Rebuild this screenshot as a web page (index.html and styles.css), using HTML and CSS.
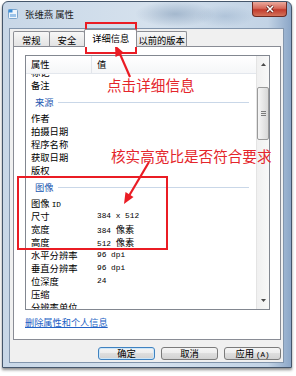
FILE: index.html
```html
<!DOCTYPE html>
<html lang="zh-CN">
<head>
    <meta charset="UTF-8">
    <meta name="viewport" content="width=device-width, initial-scale=1.0">
    <title>张维燕 属性</title>
    <link rel="stylesheet" href="styles.css">
</head>
<body>
    <div class="window">
        <div class="titlebar">
            <svg class="app-icon" width="10" height="10" viewBox="0 0 10 10">
                <rect x="0.5" y="0.5" width="9" height="9" rx="1" fill="#eef5fc" stroke="#7ea6cc"/>
                <rect x="0.5" y="0.5" width="4" height="3" fill="#3d8fd8"/>
                <rect x="2" y="5" width="6" height="3" fill="#9cc4ea"/>
            </svg>
            <span class="title">张维燕 属性</span>
            <div class="close-btn">
                <svg width="10" height="8" viewBox="0 0 10 8">
                    <path d="M2 1 L8 7 M8 1 L2 7" stroke="#5a1d16" stroke-width="3"/>
                    <path d="M2 1 L8 7 M8 1 L2 7" stroke="#fff" stroke-width="1.6"/>
                </svg>
            </div>
        </div>

        <div class="client">
            <div class="tabs">
                <div class="tab">常规</div>
                <div class="tab">安全</div>
                <div class="tab tab-active">详细信息</div>
                <div class="tab tab-last">以前的版本</div>
            </div>

            <div class="panel">
                <div class="listview">
                    <div class="list-main">
                        <div class="list-header">
                            <div class="col-name">属性</div>
                            <div class="col-val">值</div>
                        </div>
                        <div class="list-body">
                            <div class="list-rows">
                                <div class="row"><span class="name">标记</span><span class="val"></span></div>
                                <div class="row"><span class="name">备注</span><span class="val"></span></div>
                                <div class="group">来源</div>
                                <div class="row"><span class="name">作者</span><span class="val"></span></div>
                                <div class="row"><span class="name">拍摄日期</span><span class="val"></span></div>
                                <div class="row"><span class="name">程序名称</span><span class="val"></span></div>
                                <div class="row"><span class="name">获取日期</span><span class="val"></span></div>
                                <div class="row"><span class="name">版权</span><span class="val"></span></div>
                                <div class="group">图像</div>
                                <div class="row"><span class="name">图像 <span class="mono">ID</span></span><span class="val"></span></div>
                                <div class="row"><span class="name">尺寸</span><span class="val">384 x 512</span></div>
                                <div class="row"><span class="name">宽度</span><span class="val">384 <span class="unit">像素</span></span></div>
                                <div class="row"><span class="name">高度</span><span class="val">512 <span class="unit">像素</span></span></div>
                                <div class="row"><span class="name">水平分辨率</span><span class="val">96 dpi</span></div>
                                <div class="row"><span class="name">垂直分辨率</span><span class="val">96 dpi</span></div>
                                <div class="row"><span class="name">位深度</span><span class="val">24</span></div>
                                <div class="row"><span class="name">压缩</span><span class="val"></span></div>
                                <div class="row"><span class="name">分辨率单位</span><span class="val"></span></div>
                            </div>
                        </div>
                    </div>
                    <div class="scrollbar">
                        <div class="sb-btn">
                            <svg width="5" height="3" viewBox="0 0 5 3"><path d="M0 3 L2.5 0 L5 3 Z" fill="#4a4a4a"/></svg>
                        </div>
                        <div class="sb-track">
                            <div class="sb-thumb">
                                <span class="grip"></span>
                                <span class="grip"></span>
                                <span class="grip"></span>
                            </div>
                        </div>
                        <div class="sb-btn">
                            <svg width="5" height="3" viewBox="0 0 5 3"><path d="M0 0 L2.5 3 L5 0 Z" fill="#4a4a4a"/></svg>
                        </div>
                    </div>
                </div>
                <div class="panel-footer">
                    <a class="remove-link" href="#">删除属性和个人信息</a>
                </div>
            </div>

            <div class="buttons">
                <button class="btn btn-default">确定</button>
                <button class="btn">取消</button>
                <button class="btn">应用<span class="accel">(A)</span></button>
            </div>
        </div>
    </div>

    <!-- red annotations drawn over the screenshot -->
    <svg class="marks" width="296" height="376" viewBox="0 0 296 376">
        <rect x="86" y="23" width="50" height="30" fill="none" stroke="#ea1c24" stroke-width="2"/>
        <line x1="130" y1="77" x2="120" y2="54" stroke="#ea1c24" stroke-width="2.2"/>
        <polygon points="115,45 124,53 115.5,57" fill="#ea1c24"/>

        <rect x="18" y="177" width="149" height="72" fill="none" stroke="#ea1c24" stroke-width="2"/>
        <line x1="149" y1="162" x2="129.5" y2="195" stroke="#ea1c24" stroke-width="2.2"/>
        <polygon points="124,204 133.5,197 125.5,192" fill="#ea1c24"/>
    </svg>
    <div class="note note-tab">点击详细信息</div>
    <div class="note note-ratio">核实高宽比是否符合要求</div>
</body>
</html>
```

FILE: styles.css
```css
* {
    box-sizing: border-box;
}

body {
    margin: 0;
    position: relative;
    width: 296px;
    height: 376px;
    overflow: hidden;
    background: #fff;
    font-family: "Noto Sans CJK SC", sans-serif;
    font-size: 9.3px;
    color: #000;
}

.window {
    margin: 1px 0 0 2px;
    width: 290px;
    height: 367px;
    border: 1px solid #45566b;
    border-radius: 6px 6px 0 0;
    display: flex;
    flex-direction: column;
    background:
        radial-gradient(ellipse 40px 13px at 172px 12px, rgba(110, 138, 170, 0.45), transparent),
        radial-gradient(ellipse 30px 11px at 222px 14px, rgba(130, 158, 190, 0.35), transparent),
        linear-gradient(90deg, #c8d7e7 0%, #d5e1ed 50%, #c2d3e5 92%, #8ca7c8 100%);
    box-shadow: 0 2px 3px rgba(0, 0, 0, 0.45);
}

/* title bar */
.titlebar {
    height: 26px;
    display: flex;
    align-items: center;
    padding: 0 4px 2px 5px;
}

.app-icon {
    margin-right: 7px;
}

.title {
    font-size: 9.4px;
    color: #1b1b1b;
}

.close-btn {
    margin-left: auto;
    align-self: flex-start;
    width: 35px;
    height: 15px;
    border: 1px solid #6d2a22;
    border-top: none;
    border-radius: 0 0 4px 4px;
    background: linear-gradient(#eaa99c, #d66a5b 45%, #c23c2d 55%, #d3725a);
    display: flex;
    align-items: center;
    justify-content: center;
}

/* client area */
.client {
    flex: 1;
    margin: 0 7px 4px 6px;
    padding: 0 2px 0 3px;
    background: #f0f0f0;
    border: 1px solid #8295ac;
    display: flex;
    flex-direction: column;
}

.tabs {
    display: flex;
    align-items: flex-end;
    height: 17px;
}

.tab {
    height: 15px;
    padding: 1px 8px 0;
    line-height: 14px;
    border: 1px solid #8c8e94;
    border-bottom: none;
    border-radius: 2px 2px 0 0;
    background: linear-gradient(#f7f7f7, #e3e3e3);
    white-space: nowrap;
}

.tab + .tab {
    margin-left: -1px;
}

.tab-active {
    position: relative;
    z-index: 1;
    height: 18px;
    margin: 0 0 -1px -2px;
    padding: 0 7px;
    line-height: 16px;
    background: #fff;
}

.tab-last {
    padding: 1px 1px 0;
}

.panel {
    height: 294px;
    padding: 8px 0 0 11px;
    background: #fff;
    border: 1px solid #898c95;
}

/* details list */
.listview {
    width: 245px;
    height: 255px;
    border: 1px solid #828790;
    display: flex;
}

.list-main {
    flex: 1;
    min-width: 0;
    display: flex;
    flex-direction: column;
}

.list-header {
    height: 18px;
    display: flex;
    line-height: 17px;
    border-bottom: 1px solid #e3e7ed;
    background: linear-gradient(#fff, #f5f6f8);
}

.col-name {
    width: 66px;
    padding-left: 5px;
    border-right: 1px solid #e2e5ea;
}

.col-val {
    padding-left: 5px;
}

.list-body {
    flex: 1;
    overflow: hidden;
}

.list-rows {
    margin-top: -8px;
}

.row {
    display: flex;
    height: 13px;
    line-height: 13px;
    white-space: nowrap;
}

.name {
    flex: none;
    width: 66px;
    padding-left: 5px;
}

.val {
    padding-left: 5px;
    font-family: "Liberation Mono", monospace;
    font-size: 7.8px;
}

.mono {
    font-family: "Liberation Mono", monospace;
    font-size: 7.8px;
}

.unit {
    font-family: "Noto Sans CJK SC", sans-serif;
    font-size: 9.3px;
}

.group {
    display: flex;
    align-items: center;
    height: 13px;
    margin: 4px 0 3px;
    padding-left: 9px;
    line-height: 13px;
    color: #2157b0;
}

.group::after {
    content: "";
    flex: 1;
    height: 1px;
    margin: 0 7px 0 4px;
    background: #c9d7e8;
}

/* scrollbar */
.scrollbar {
    width: 13px;
    display: flex;
    flex-direction: column;
    border-left: 1px solid #e4e4e4;
    background: linear-gradient(90deg, #f0f0f0, #f8f8f8);
}

.sb-btn {
    height: 17px;
    display: flex;
    align-items: center;
    justify-content: center;
}

.sb-track {
    flex: 1;
    padding-top: 14px;
}

.sb-thumb {
    height: 53px;
    border: 1px solid #9a9a9a;
    border-radius: 2px;
    background: linear-gradient(90deg, #f5f5f5, #e7e7e7 50%, #d8d8d8);
    display: flex;
    flex-direction: column;
    align-items: center;
    justify-content: center;
    gap: 1px;
}

.grip {
    width: 5px;
    height: 1px;
    background: #7c7c7c;
}

.panel-footer {
    margin-top: 6px;
    line-height: 12px;
}

.remove-link {
    font-size: 9.2px;
    color: #2160c4;
    text-decoration: underline;
}

/* dialog buttons */
.buttons {
    display: flex;
    justify-content: flex-end;
    gap: 6px;
    margin-top: 7px;
}

.btn {
    width: 57px;
    height: 13px;
    padding: 0;
    font-family: "Noto Sans CJK SC", sans-serif;
    font-size: 9.3px;
    line-height: 11px;
    color: #000;
    border: 1px solid #7b7b7b;
    border-radius: 3px;
    background: linear-gradient(#f4f4f4 0%, #ececec 50%, #dedede 50%, #d2d2d2 100%);
}

.btn-default {
    border-color: #3f82c0;
    box-shadow: inset 0 0 0 1px #cde6f8;
}

.accel {
    font-family: "Liberation Mono", monospace;
    font-size: 7.5px;
    margin-left: 2px;
}

/* red annotations */
.marks {
    position: absolute;
    left: 0;
    top: 0;
    pointer-events: none;
}

.note {
    position: absolute;
    color: #e4262c;
    font-size: 14.6px;
    line-height: 1;
    white-space: nowrap;
}

.note-tab {
    left: 107px;
    top: 78px;
}

.note-ratio {
    left: 111px;
    top: 149px;
}
```
